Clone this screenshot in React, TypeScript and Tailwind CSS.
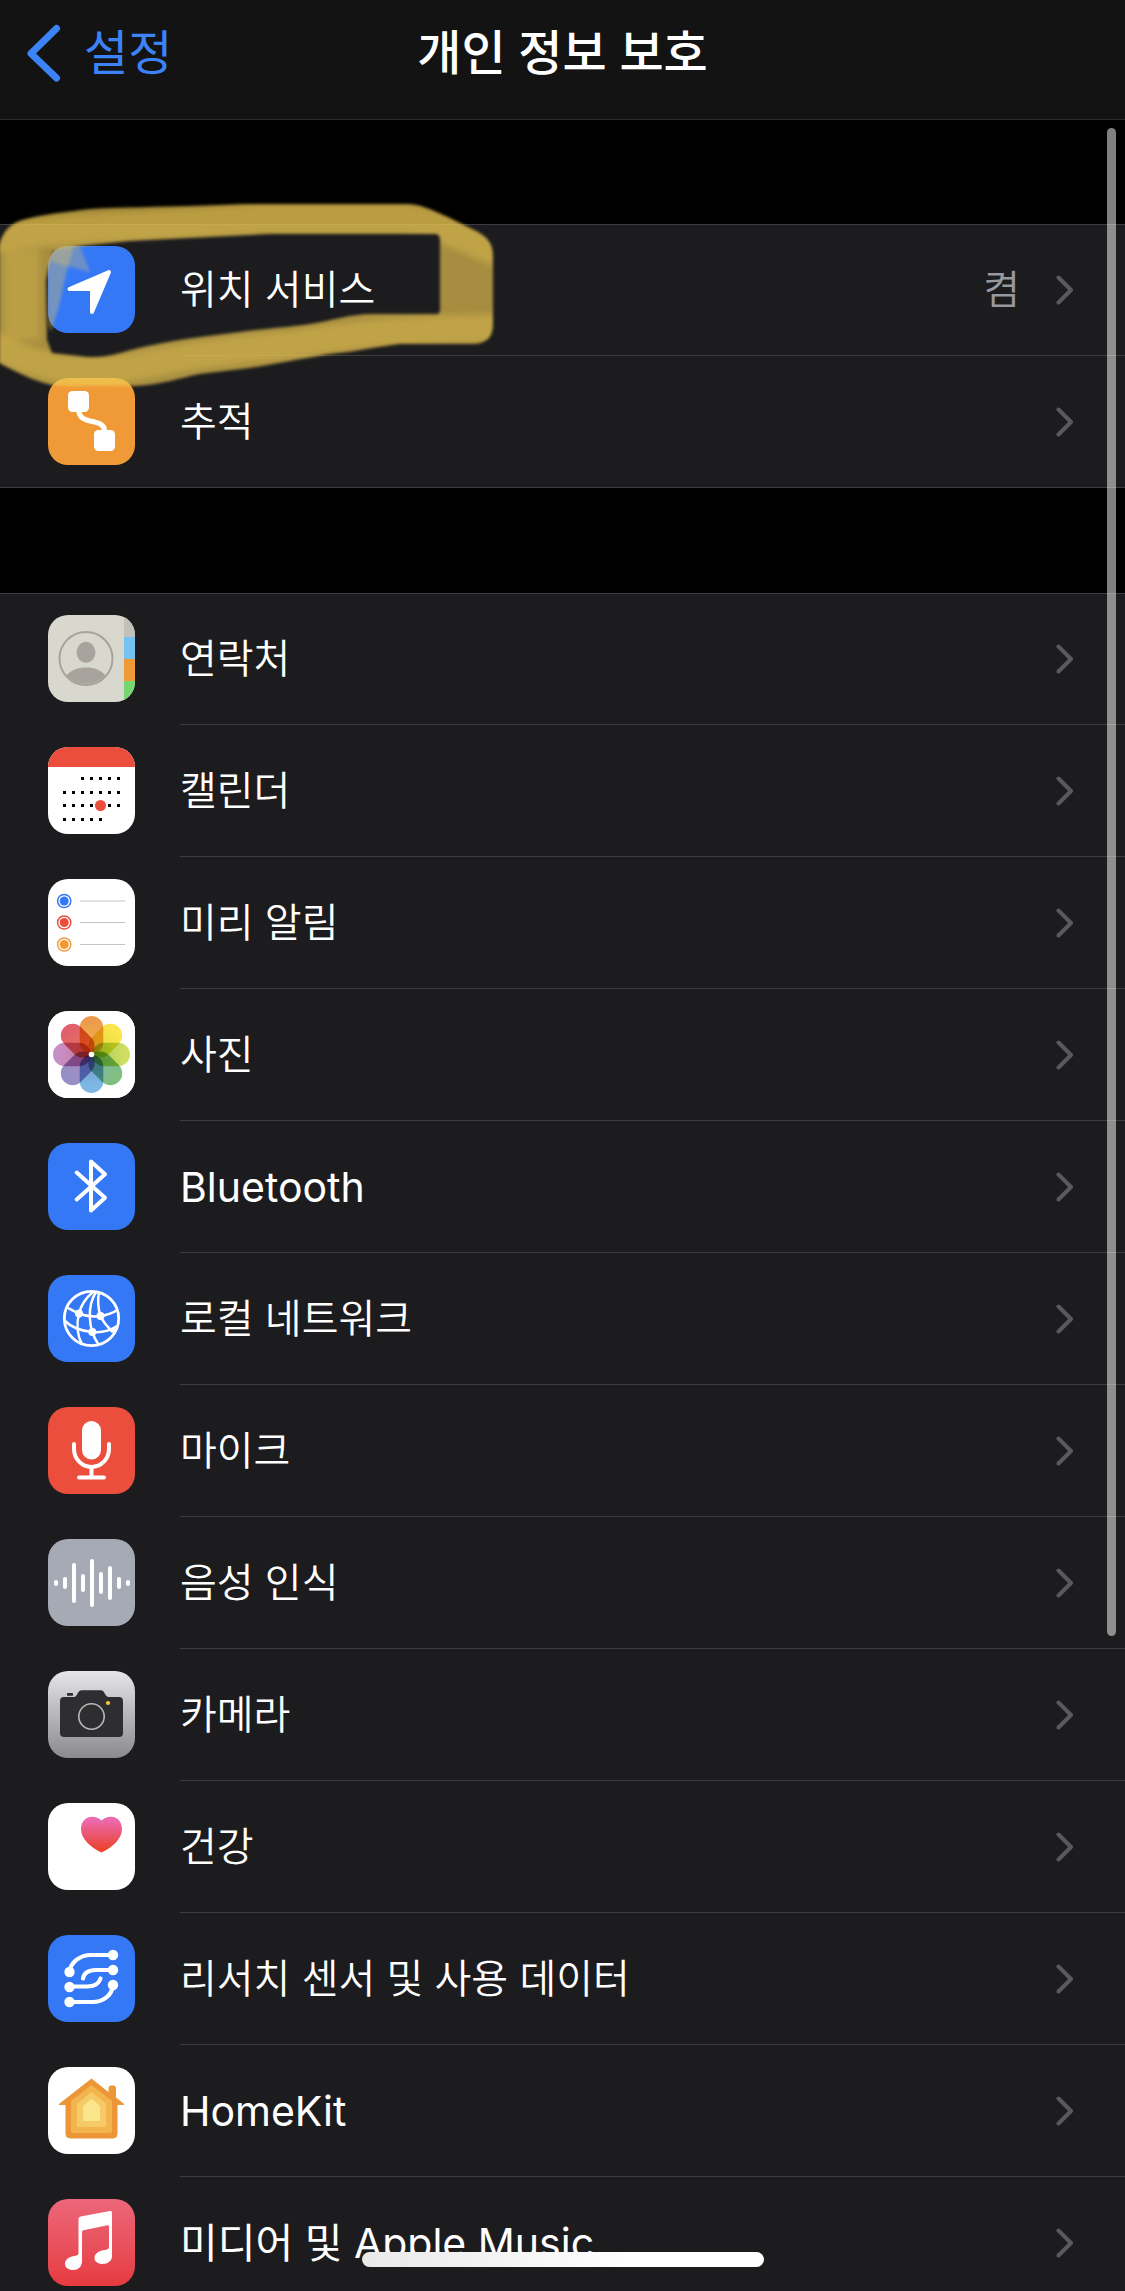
import type { ReactNode } from "react";

function Tile({ className, children }: { className: string; children: ReactNode }) {
  return (
    <span className={`block size-[87px] shrink-0 overflow-hidden rounded-[20px] ${className}`}>
      <svg viewBox="0 0 87 87" className="block size-full" fill="none" aria-hidden="true">
        {children}
      </svg>
    </span>
  );
}

const LocationIcon = () => (
  <Tile className="bg-[#3478f6]">
    <path d="M61 26 21.5 43H44v23Z" fill="#fff" stroke="#fff" strokeWidth="4" strokeLinejoin="round" />
  </Tile>
);

const TrackingIcon = () => (
  <Tile className="bg-[#f09a37]">
    <rect x="20" y="13" width="21" height="21" rx="4.5" fill="#fff" />
    <rect x="46" y="52" width="21" height="21" rx="4.5" fill="#fff" />
    <path d="M31 33C31 39 35 41.500 42 43C50 44.700 56.500 46 56.500 53" stroke="#fff" strokeWidth="5" />
  </Tile>
);

const ContactsIcon = () => (
  <Tile className="bg-[#d8d8cf]">
    <rect x="76" y="0" width="11" height="22" fill="#c2c1b9" />
    <rect x="76" y="22" width="11" height="22" fill="#75c3f3" />
    <rect x="76" y="44" width="11" height="22" fill="#f09a37" />
    <rect x="76" y="66" width="11" height="21" fill="#77d672" />
    <circle cx="38" cy="43.500" r="26.500" stroke="#a8a39d" strokeWidth="2" />
    <ellipse cx="38" cy="37.300" rx="9.500" ry="10.500" fill="#a8a39d" />
    <path d="M18.500 60.500C23 55 30 52.500 38 52.500S53 55 57.500 60.500A27 27 0 0 1 18.500 60.500Z" fill="#a8a39d" />
  </Tile>
);

const CALENDAR_DOTS = [
  { y: 31, xs: [34, 43, 52, 61, 70] },
  { y: 45, xs: [16, 25, 34, 43, 52, 61, 70] },
  { y: 58, xs: [16, 25, 34, 43, 61, 70] },
  { y: 72, xs: [16, 25, 34, 43, 52] },
];

const CalendarIcon = () => (
  <Tile className="bg-white">
    <rect width="87" height="20" fill="#eb4e3d" />
    {CALENDAR_DOTS.map(({ y, xs }) =>
      xs.map((x) => <rect key={`${x}-${y}`} x={x - 1} y={y - 1} width="3" height="3" fill="#000" />),
    )}
    <circle cx="52.500" cy="58.500" r="5.500" fill="#eb4e3d" />
  </Tile>
);

const RemindersIcon = () => (
  <Tile className="bg-white">
    {[
      { y: 22, color: "#3478f6" },
      { y: 43.5, color: "#eb4e3d" },
      { y: 65.5, color: "#f09a37" },
    ].map(({ y, color }) => (
      <g key={color}>
        <circle cx="16.200" cy={y} r="6.600" stroke={color} strokeWidth="1.500" />
        <circle cx="16.200" cy={y} r="4.500" fill={color} />
        <path d={`M32 ${y}H77`} stroke="#c3c3c3" strokeWidth="1" />
      </g>
    ))}
  </Tile>
);

const PETALS = [
  ["#ec9a4c", "#f2bc4c"],
  ["#fbe54c", "#dedb44"],
  ["#d0de62", "#9fca58"],
  ["#80bf80", "#84b8b4"],
  ["#7db9e4", "#7698cc"],
  ["#9490c6", "#b088c0"],
  ["#c68fc6", "#cc7898"],
  ["#e0606c", "#e87c50"],
];

const PhotosIcon = () => (
  <Tile className="bg-white">
    <defs>
      {PETALS.map(([outer, inner], i) => (
        <linearGradient key={outer} id={`petal-${i}`} x1="0" y1="0" x2="0" y2="1">
          <stop offset="0.150" stopColor={outer} />
          <stop offset="1" stopColor={inner} />
        </linearGradient>
      ))}
    </defs>
    <g className="isolate">
      <rect width="87" height="87" fill="#fff" />
      {PETALS.map(([outer], i) => (
        <rect
          key={outer}
          x="31.700"
          y="5"
          width="23.600"
          height="38"
          rx="11.800"
          fill={`url(#petal-${i})`}
          transform={`rotate(${i * 45} 43.5 43.5)`}
          className="mix-blend-multiply"
        />
      ))}
    </g>
    <circle cx="43.500" cy="43.500" r="2.800" fill="#fff" />
  </Tile>
);

const BluetoothIcon = () => (
  <Tile className="bg-[#3478f6]">
    <path
      d="M28.700 29.500 57 54.700 43 67.500V18.500L57 31.300 28.700 56.500"
      stroke="#fff"
      strokeWidth="4"
      strokeLinecap="round"
      strokeLinejoin="round"
    />
  </Tile>
);

const NetworkIcon = () => (
  <Tile className="bg-[#3478f6]">
    <g stroke="#fff" strokeWidth="2.500">
      <circle cx="43.500" cy="43.500" r="27.200" strokeWidth="2.800" />
      <path d="M18 32C22 34 27 37 31 38.500C38 41.500 46 42 52.500 41C59 40 65 38 69 35" />
      <path d="M17 46C24 53 34 56 44.300 57C53 57.700 62 56 69 51" />
      <path d="M45 17C39 22 33 30 31 38.500C28.500 48 29 60 34 69" />
      <path d="M48 17C43 25 41.500 34 41.800 42C42 48 43 53 44.300 57C46 62 48 66 50.500 69.500" />
      <path d="M51 17C49.500 25 50 33 52.500 41C55 47 59.500 52 65 57" />
    </g>
    <circle cx="31" cy="38.500" r="4" fill="#fff" />
    <circle cx="52.500" cy="41" r="4" fill="#fff" />
    <circle cx="44.300" cy="57" r="4" fill="#fff" />
    <circle cx="64.500" cy="55" r="2.500" fill="#fff" />
  </Tile>
);

const MicrophoneIcon = () => (
  <Tile className="bg-[#eb4e3d]">
    <rect x="34" y="14" width="19" height="38.500" rx="9.500" fill="#fff" />
    <path
      d="M26 37v5a17.500 18 0 0 0 35 0v-5M43.500 60v10.500M31 70.500h25"
      stroke="#fff"
      strokeWidth="4"
      strokeLinecap="round"
    />
  </Tile>
);

const WAVE_BARS = [
  [41, 47],
  [38, 50],
  [24, 64],
  [35, 53],
  [20, 68],
  [33, 55],
  [27, 61],
  [38, 50],
  [41, 47],
];

const SpeechIcon = () => (
  <Tile className="bg-[#a5aab4]">
    {WAVE_BARS.map(([top, bottom], i) => (
      <rect key={i} x={6 + i * 9} y={top} width="4" height={bottom - top} rx="2" fill="#fff" />
    ))}
  </Tile>
);

const CameraIcon = () => (
  <Tile className="bg-linear-to-b from-[#e5e5ea] to-[#8a8a8f]">
    <path
      d="M16 26H26C29.500 26 29 19.200 34 19.200H52.500C57.500 19.200 56.500 26 61 26H71Q75 26 75 30V62Q75 66 71 66H16Q12 66 12 62V30Q12 26 16 26Z"
      fill="#2e2e30"
    />
    <rect x="19" y="22" width="6" height="2.700" rx="0.600" fill="#2e2e30" />
    <circle cx="43.500" cy="45.500" r="12.700" stroke="#b9b9b9" strokeWidth="1.600" />
    <circle cx="60" cy="32" r="2.100" fill="#f6ca3c" />
  </Tile>
);

const HealthIcon = () => (
  <Tile className="bg-white">
    <defs>
      <linearGradient id="heart" x1="0" y1="0" x2="0" y2="1">
        <stop offset="0.100" stopColor="#ec69ae" />
        <stop offset="0.900" stopColor="#eb4430" />
      </linearGradient>
    </defs>
    <path
      d="M53.500 17.500C56 15 59 13.700 63 13.700C69.500 13.700 74 19 74 26C74 36 64 44.500 53.500 49.500C43 44.500 33 36 33 26C33 19 37.500 13.700 44 13.700C48 13.700 51 15 53.500 17.500Z"
      fill="url(#heart)"
    />
  </Tile>
);

const ResearchIcon = () => (
  <Tile className="bg-[#3478f6]">
    <path
      d="M65 20H43C32 20 23 27 21.500 36.500M65 35H48C40 35 36 38 35 43.500M21.500 51.500H39C47 51.500 51 48.500 52.500 43.500M21.500 67H44C56 67 64 60 65 50"
      stroke="#fff"
      strokeWidth="4.200"
      strokeLinecap="round"
    />
    {[20, 35, 50].map((y) => (
      <g key={y} fill="#fff">
        <circle cx="65" cy={y} r="5.200" />
        <circle cx="21.500" cy={y + 17} r="5.200" />
      </g>
    ))}
  </Tile>
);

const HomeIcon = () => (
  <Tile className="bg-white">
    <path
      d="M43.500 12 61 26V21Q61 19 63 19H65.500Q67.500 19 67.500 21V30.500L76 37.500H69V67Q69 71 65 71H22Q18 71 18 67V37.500H11Z"
      fill="#ec9638"
      stroke="#ec9638"
      strokeLinejoin="round"
    />
    <path d="M43.500 18 64 34V64Q64 66 62 66H25Q23 66 23 64V34Z" fill="#f2b44d" />
    <path d="M43.500 25 58 36.500V60H29V36.500Z" fill="#f6cb67" />
    <path d="M43.500 31.700 52 39V54H35V39Z" fill="#fae68a" />
  </Tile>
);

const MusicIcon = () => (
  <Tile className="bg-linear-to-b from-[#ec667a] to-[#e63a40]">
    <path
      d="M32.500 17.500 62 12Q64 11.700 64 13.500V57C64 61.500 60 65 54.500 65C50 65 46.500 62.500 46.500 59C46.500 55 50 52.500 54 51.500L59 50.500Q61 50 61 48V27.500Q61 26 59.500 26.300L35.500 31.200Q34 31.500 34 33V62.500C34 67.500 30 71 25 71C20.500 71 17 68.500 17 65C17 61 20 58.500 24 57.500L28.500 56.500Q30.500 56 30.500 54V20Q30.500 18 32.500 17.500Z"
      fill="#fff"
    />
  </Tile>
);

type Item = { label: string; icon: ReactNode; value?: string; latin?: boolean };

const SYSTEM_ITEMS: Item[] = [
  { label: "위치 서비스", icon: <LocationIcon />, value: "켬" },
  { label: "추적", icon: <TrackingIcon /> },
];

const APP_ITEMS: Item[] = [
  { label: "연락처", icon: <ContactsIcon /> },
  { label: "캘린더", icon: <CalendarIcon /> },
  { label: "미리 알림", icon: <RemindersIcon /> },
  { label: "사진", icon: <PhotosIcon /> },
  { label: "Bluetooth", icon: <BluetoothIcon />, latin: true },
  { label: "로컬 네트워크", icon: <NetworkIcon /> },
  { label: "마이크", icon: <MicrophoneIcon /> },
  { label: "음성 인식", icon: <SpeechIcon /> },
  { label: "카메라", icon: <CameraIcon /> },
  { label: "건강", icon: <HealthIcon /> },
  { label: "리서치 센서 및 사용 데이터", icon: <ResearchIcon /> },
  { label: "HomeKit", icon: <HomeIcon />, latin: true },
  { label: "미디어 및 Apple Music", icon: <MusicIcon />, latin: true },
];

function Row({ label, icon, value, latin }: Item) {
  return (
    <li className="group">
      <a href="#" className="flex h-[132px] items-stretch">
        <span className="flex items-center border-b border-transparent pr-[45px] pl-12 group-last:border-[#3d3d40]">
          {icon}
        </span>
        <span className="flex min-w-0 flex-1 items-center border-b border-[#3d3d40] pr-[51px]">
          <span
            className={`flex-1 truncate leading-[60px] text-white ${
              latin ? "text-[41px] font-normal" : "text-[40px] font-[350]"
            }`}
          >
            {label}
          </span>
          {value && <span className="mr-9 text-[40px] leading-[60px] font-[350] text-[#98989f]">{value}</span>}
          <svg viewBox="0 0 18 30" className="h-[30px] w-[18px] shrink-0" fill="none" aria-hidden="true">
            <path
              d="M2.500 2.500 15 15 2.500 27.500"
              stroke="#5a5a5e"
              strokeWidth="4"
              strokeLinecap="round"
              strokeLinejoin="round"
            />
          </svg>
        </span>
      </a>
    </li>
  );
}

function Group({ items, className }: { items: Item[]; className: string }) {
  return (
    <ul className={`relative bg-[#1c1c1e] ${className}`}>
      <li aria-hidden="true" className="absolute inset-x-0 top-0 h-px bg-[#3d3d40]" />
      {items.map((item) => (
        <Row key={item.label} {...item} />
      ))}
    </ul>
  );
}

/* Hand-drawn marker ring around the first row. */
function MarkerRing() {
  return (
    <svg
      viewBox="0 0 520 220"
      className="pointer-events-none absolute top-[70px] left-0 h-[220px] w-[520px]"
      fill="none"
      aria-hidden="true"
    >
      <defs>
        <filter id="soft" filterUnits="userSpaceOnUse" x="-20" y="-10" width="540" height="230">
          <feGaussianBlur stdDeviation="1.800" />
        </filter>
        <filter id="softer" filterUnits="userSpaceOnUse" x="-60" y="-10" width="600" height="230">
          <feGaussianBlur stdDeviation="3" />
        </filter>
        <mask id="ring" maskUnits="userSpaceOnUse" x="-10" y="0" width="530" height="220">
          <path
            fillRule="evenodd"
            filter="url(#soft)"
            fill="#fff"
            d="M-1 56C2 43 10 32 26 29C45 24 65 22 90 19C125 17 160 17 190 16L245 14H408C420 14 430 19 450 28L478 42C488 48 493 54 493 66V134C493 147 487 154 472 154H400C380 156 355 162 330 164C300 169 270 175 250 178L200 184C180 188 160 195 136 196H58C40 194 20 184 -1 173ZM80 56 130 51 190 48 270 44H436Q440 45 440 50V120Q440 124 436 124H372C350 124 330 131 310 134C290 137 260 139 240 142L200 147C170 151 140 157 120 163C105 167 95 168 80 166L52 163 47 150 46 90 52 60Z"
          />
        </mask>
      </defs>
      <g mask="url(#ring)">
        <rect x="-10" width="530" height="220" fill="#efc852" fillOpacity="0.660" />
        <g filter="url(#softer)" stroke="#efc852" strokeOpacity="0.360">
          <path d="M-10 48C60 38 100 38 160 35L260 29H405C430 30 465 48 500 62" strokeWidth="30" />
          <path d="M-10 155C50 182 80 182 120 179C170 170 220 160 290 155C340 146 380 140 510 138" strokeWidth="28" />
          <path d="M22 60V150" strokeOpacity="0.280" strokeWidth="36" />
        </g>
      </g>
      <g fill="#efc852" filter="url(#soft)">
        <path d="M50 60C54 57 62 56 80 56L90 82 52 72Z" fillOpacity="0.300" />
        <path d="M48 68 54 58 74 56 66 84 58 120 51 142 48 134Z" fillOpacity="0.340" />
      </g>
    </svg>
  );
}

export default function App() {
  return (
    <div className="relative flex h-screen flex-col overflow-hidden bg-black font-['Inter','Noto_Sans_CJK_KR',sans-serif]">
      <header className="grid h-[120px] shrink-0 grid-cols-[1fr_auto_1fr] items-center border-b border-[#2a2a2a] bg-[#131313] px-[26px] pb-[14px]">
        <a href="#" className="flex items-center gap-[22px] justify-self-start text-[#3c83f7]">
          <svg viewBox="0 0 36 58" className="h-[58px] w-9" fill="none" aria-hidden="true">
            <path
              d="M30.500 4.500 5 29.500 30.500 54"
              stroke="currentColor"
              strokeWidth="7"
              strokeLinecap="round"
              strokeLinejoin="round"
            />
          </svg>
          <span className="text-[48px] leading-[72px] font-normal">설정</span>
        </a>
        <h1 className="text-[48px] leading-[72px] font-medium text-white">개인 정보 보호</h1>
      </header>

      <main className="relative min-h-0 flex-1 overflow-y-auto [scrollbar-width:none]">
        <Group items={SYSTEM_ITEMS} className="mt-[104px]" />
        <Group items={APP_ITEMS} className="mt-[105px]" />
        <MarkerRing />
      </main>

      <div className="absolute top-32 right-[9px] h-[1508px] w-[9px] rounded-full bg-white/50" />
      <div className="absolute bottom-6 left-1/2 h-[15px] w-[402px] -translate-x-1/2 rounded-full bg-linear-to-r from-[#e9e9e9] to-white to-70%" />
    </div>
  );
}
